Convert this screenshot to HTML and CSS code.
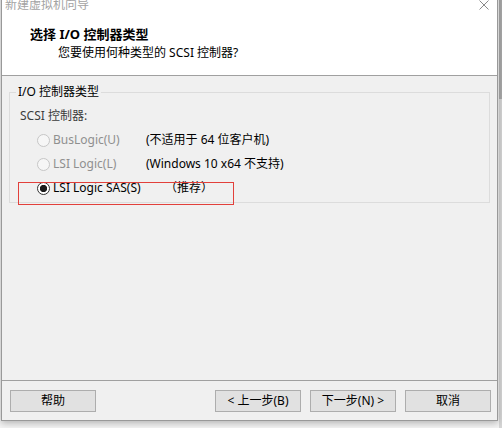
FILE: index.html
```html
<!DOCTYPE html>
<html lang="zh-CN">
<head>
<meta charset="utf-8">
<title>新建虚拟机向导</title>
<link rel="stylesheet" href="styles.css">
</head>
<body>
<div class="window">
  <div class="titlebar">
    <span class="title">新建虚拟机向导</span>
    <svg class="close" viewBox="0 0 10 10" width="10" height="10"><path d="M0.5 0.5L9.5 9.5M9.5 0.5L0.5 9.5" stroke="#8a8a8a" stroke-width="1" fill="none"/></svg>
  </div>
  <div class="header">
    <div class="heading">选择 I/O 控制器类型</div>
    <div class="subtitle">您要使用何种类型的 SCSI 控制器?</div>
  </div>
  <div class="content">
    <fieldset class="group">
      <legend>I/O 控制器类型</legend>
      <div class="group-label">SCSI 控制器:</div>
      <div class="option disabled"><span class="radio"></span><span class="opt-label">BusLogic(U)</span><span class="opt-desc">(不适用于 64 位客户机)</span></div>
      <div class="option disabled"><span class="radio"></span><span class="opt-label">LSI Logic(L)</span><span class="opt-desc">(Windows 10 x64 不支持)</span></div>
      <div class="option checked"><span class="radio"></span><span class="opt-label">LSI Logic SAS(S)</span><span class="opt-desc">（推荐）</span><span class="annotation"></span></div>
    </fieldset>
  </div>
  <div class="footer">
    <button class="btn help">帮助</button>
    <button class="btn">&lt; 上一步(B)</button>
    <button class="btn">下一步(N) &gt;</button>
    <button class="btn">取消</button>
  </div>
</div>
</body>
</html>
```

FILE: styles.css
```css
html, body {
  margin: 0;
  padding: 0;
}
body {
  width: 502px;
  height: 428px;
  overflow: hidden;
  font-family: "Noto Sans", "Noto Sans CJK SC", sans-serif;
  font-size: 12px;
  color: #000;
  background-color: #f4f4f4;
  background-image: linear-gradient(#a9a9a9, #a9a9a9), linear-gradient(#d6d6d6, #d6d6d6);
  background-repeat: no-repeat;
  background-position: right 0 top 0, right 0 top 99px;
  background-size: 3px 99px, 3px 100%;
}
.window {
  box-sizing: border-box;
  width: 497px;
  margin: -11px 0 0 1px;
  border: 1px solid #999;
  background: #f0f0f0;
  box-shadow: 0 2px 7px rgba(0, 0, 0, 0.28);
}
.titlebar {
  box-sizing: border-box;
  height: 30px;
  background: #fff;
  display: flex;
  align-items: center;
  justify-content: space-between;
  padding: 0 8px 0 3px;
}
.title {
  font-size: 12px;
  line-height: 16px;
  color: #a3a3a3;
}
.close {
  display: block;
}
.header {
  box-sizing: border-box;
  height: 56px;
  background: #fff;
  border-bottom: 1px solid #a0a0a0;
  padding-top: 5px;
}
.heading {
  font-weight: 700;
  font-size: 13px;
  line-height: 18px;
  padding-left: 28px;
}
.subtitle {
  font-size: 12px;
  line-height: 16px;
  margin-top: 2px;
  padding-left: 56px;
}
.content {
  box-sizing: border-box;
  height: 304px;
  padding: 8px 7px 0;
}
.group {
  margin: 0;
  min-width: 0;
  border: 1px solid #dcdcdc;
  padding: 0 6px 2px 6px;
}
.group legend {
  padding: 0 2px;
  font-size: 12px;
  line-height: 16px;
}
.group-label {
  margin-top: 8px;
  margin-bottom: 4px;
  line-height: 16px;
  padding-left: 4px;
  color: #3c3c3c;
}
.option {
  position: relative;
  display: flex;
  align-items: center;
  height: 24px;
  line-height: 16px;
}
.radio {
  box-sizing: border-box;
  width: 13px;
  height: 13px;
  border-radius: 50%;
  margin-left: 21px;
  margin-right: 3px;
  flex: none;
}
.opt-label {
  width: 93px;
  flex: none;
}
.option.disabled .radio {
  border: 1px solid #c6c6c6;
  background: #f6f6f6;
}
.option.disabled .opt-label {
  color: #8f8f8f;
}
.option.checked .radio {
  border: 1px solid #333;
  background: radial-gradient(circle, #1b1b1b 0, #1b1b1b 3.3px, #fff 4px);
}
.option.checked .opt-label {
  width: 112px;
}
.annotation {
  position: absolute;
  left: 2px;
  top: 6px;
  width: 216px;
  height: 23px;
  box-sizing: border-box;
  border: 1px solid #e2403b;
}
.footer {
  display: flex;
  gap: 9px;
  border-top: 1px solid #a0a0a0;
  padding: 9px 6px 8px 8px;
}
.btn {
  box-sizing: border-box;
  width: 86px;
  height: 22px;
  padding: 0;
  border: 1px solid #adadad;
  background: #e1e1e1;
  font-family: inherit;
  font-size: 12px;
  line-height: 20px;
  color: #000;
}
.btn.help {
  margin-right: auto;
}
```
